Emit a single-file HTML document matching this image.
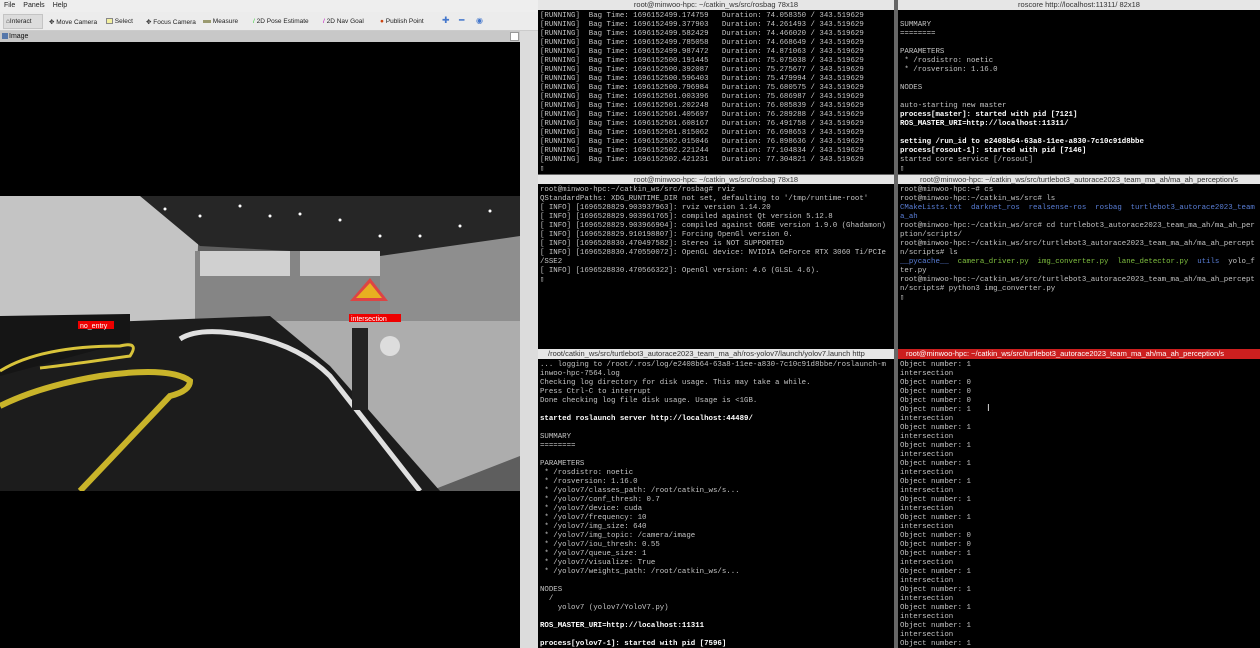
<!DOCTYPE html>
<html><head><meta charset="utf-8"><style>
*{margin:0;padding:0;box-sizing:border-box}
body{width:1260px;height:648px;overflow:hidden;background:#d9d9d9;font-family:"Liberation Sans",sans-serif;position:relative}
.abs{position:absolute}
.menu{left:0;top:0;width:538px;height:12px;background:#eeeeee;font-size:7px;color:#222}
.menu span{margin:0 4px;line-height:12px}
.tool{left:0;top:12px;width:538px;height:19px;background:#ececec;font-size:6.5px;color:#222;border-bottom:1px solid #ccc}
.tool span{position:absolute;top:6px}
.ph{left:0;top:31px;width:520px;height:11px;background:#c8c8c8;font-size:7px;color:#111;line-height:11px;padding-left:9px}
.term{background:#000;color:#c4c4c4;font-family:"Liberation Mono",monospace;font-size:7.4px;line-height:9px;white-space:pre;overflow:hidden;padding-left:2px;padding-top:2px}
.tt{background:#e6e6e6;color:#333;font-size:7.5px;line-height:9px;text-align:center;white-space:nowrap;overflow:hidden}
b{color:#fff;font-weight:bold}
.g{color:#7fbf3f}.bl{color:#5a7fd8}
</style></head><body>
<div class="abs menu"><span>File</span><span>Panels</span><span>Help</span></div>
<div class="abs tool">
<div class="abs" style="left:3px;top:2px;width:40px;height:15px;background:#dcdcdc;border:1px solid #c4c4c4"></div>
<span style="left:6px">⌂Interact</span><span style="left:49px">✥ Move Camera</span>
<span style="left:106px"><i style="display:inline-block;width:7px;height:6px;background:#f3f0a0;border:1px solid #888;vertical-align:middle"></i> Select</span>
<span style="left:146px">✥ Focus Camera</span><span style="left:203px"><i style="display:inline-block;width:8px;height:3px;background:#9a9a70;vertical-align:middle"></i> Measure</span>
<span style="left:253px"><b style="color:#3c3;font-weight:normal">/</b> 2D Pose Estimate</span>
<span style="left:323px"><b style="color:#b0b;font-weight:normal">/</b> 2D Nav Goal</span>
<span style="left:380px;color:#222"><b style="color:#c41;font-weight:normal">●</b> Publish Point</span>
<span style="left:442px;color:#47c;font-size:9px;top:3px">✚</span><span style="left:459px;color:#47c;font-size:9px;top:3px">━</span><span style="left:476px;color:#47c;font-size:8px;top:4px">◉</span>
</div>
<div class="abs ph">Image</div>
<div class="abs" style="left:2px;top:33px;width:6px;height:6px;background:#57a"></div>
<div class="abs" style="left:510px;top:32px;width:9px;height:9px;background:#fff;border:1px solid #999"></div>
<div class="abs" style="left:0;top:42px;width:520px;height:606px;background:#000"></div>
<div class="abs" style="left:520px;top:31px;width:18px;height:617px;background:#dcdcdc"></div>
<svg class="abs" style="left:0;top:196px" width="520" height="295" viewBox="0 0 520 295">
<rect width="520" height="295" fill="#5e5e5e"/>
<polygon points="0,0 200,0 195,125 0,130" fill="#c4c4c4"/>
<polygon points="140,0 520,0 520,80 380,60 200,50" fill="#262626"/>
<rect x="195" y="55" width="185" height="70" fill="#858585"/>
<rect x="200" y="55" width="90" height="25" fill="#d0d0d0"/>
<rect x="300" y="55" width="80" height="25" fill="#c8c8c8"/>
<polygon points="380,60 520,40 520,200 380,120" fill="#8e8e8e"/>
<polygon points="270,125 520,125 520,260 430,295 350,295 300,170" fill="#adadad"/>
<polygon points="0,130 270,120 330,170 440,295 0,295" fill="#1c1c1c"/>
<polygon points="0,120 130,118 130,145 0,180" fill="#151515"/>
<path d="M0,210 Q40,190 100,180 Q170,170 190,185 Q190,195 170,200 L80,295" fill="none" stroke="#c9b42a" stroke-width="6"/>
<path d="M0,175 Q40,150 120,150 Q140,145 130,160 Q60,170 40,172" fill="none" stroke="#d8c33a" stroke-width="3"/>
<path d="M180,143 Q200,130 250,140 Q300,150 330,180 L420,295" fill="none" stroke="#e0e0e0" stroke-width="5"/>
<polygon points="350,105 370,82 388,105" fill="#d44"/>
<polygon points="356,102 370,87 382,102" fill="#e8b020"/>
<rect x="352" y="132" width="16" height="82" fill="#222"/>
<circle cx="390" cy="150" r="10" fill="#ddd"/>
<rect x="78" y="125" width="36" height="8" fill="#e00"/>
<text x="80" y="132" font-size="7" fill="#fff" font-family="Liberation Sans">no_entry</text>
<rect x="349" y="118" width="52" height="8" fill="#e00"/>
<text x="351" y="125" font-size="7" fill="#fff" font-family="Liberation Sans">intersection</text>
<g fill="#fff"><circle cx="165" cy="13" r="1.5"/><circle cx="200" cy="20" r="1.5"/><circle cx="240" cy="10" r="1.5"/><circle cx="270" cy="20" r="1.5"/><circle cx="300" cy="18" r="1.5"/><circle cx="340" cy="24" r="1.5"/><circle cx="380" cy="40" r="1.5"/><circle cx="420" cy="40" r="1.5"/><circle cx="460" cy="30" r="1.5"/><circle cx="490" cy="15" r="1.5"/></g>
</svg>
<!-- terminals -->
<div class="abs" style="left:538px;top:0;width:722px;height:648px;background:#666"></div>
<div class="abs tt" style="left:538px;top:0;width:356px;height:10px">root@minwoo-hpc: ~/catkin_ws/src/rosbag 78x18</div>
<div class="abs tt" style="left:898px;top:0;width:362px;height:10px">roscore http://localhost:11311/ 82x18</div>
<div class="abs term" style="left:538px;top:10px;width:356px;height:164px">[RUNNING]  Bag Time: 1696152499.174759   Duration: 74.058350 / 343.519629
[RUNNING]  Bag Time: 1696152499.377903   Duration: 74.261493 / 343.519629
[RUNNING]  Bag Time: 1696152499.582429   Duration: 74.466020 / 343.519629
[RUNNING]  Bag Time: 1696152499.785058   Duration: 74.668649 / 343.519629
[RUNNING]  Bag Time: 1696152499.987472   Duration: 74.871063 / 343.519629
[RUNNING]  Bag Time: 1696152500.191445   Duration: 75.075038 / 343.519629
[RUNNING]  Bag Time: 1696152500.392087   Duration: 75.275677 / 343.519629
[RUNNING]  Bag Time: 1696152500.596403   Duration: 75.479994 / 343.519629
[RUNNING]  Bag Time: 1696152500.796984   Duration: 75.680575 / 343.519629
[RUNNING]  Bag Time: 1696152501.003396   Duration: 75.686987 / 343.519629
[RUNNING]  Bag Time: 1696152501.202248   Duration: 76.085839 / 343.519629
[RUNNING]  Bag Time: 1696152501.405697   Duration: 76.289288 / 343.519629
[RUNNING]  Bag Time: 1696152501.608167   Duration: 76.491758 / 343.519629
[RUNNING]  Bag Time: 1696152501.815062   Duration: 76.698653 / 343.519629
[RUNNING]  Bag Time: 1696152502.015046   Duration: 76.898636 / 343.519629
[RUNNING]  Bag Time: 1696152502.221244   Duration: 77.104834 / 343.519629
[RUNNING]  Bag Time: 1696152502.421231   Duration: 77.304821 / 343.519629
▯</div>
<div class="abs term" style="left:898px;top:10px;width:362px;height:164px">
SUMMARY
========

PARAMETERS
 * /rosdistro: noetic
 * /rosversion: 1.16.0

NODES

auto-starting new master
<b>process[master]: started with pid [7121]</b>
<b>ROS_MASTER_URI=http://localhost:11311/</b>

<b>setting /run_id to e2408b64-63a8-11ee-a830-7c10c91d8bbe</b>
<b>process[rosout-1]: started with pid [7146]</b>
started core service [/rosout]
▯</div>
<div class="abs tt" style="left:538px;top:175px;width:356px;height:9px">root@minwoo-hpc: ~/catkin_ws/src/rosbag 78x18</div>
<div class="abs tt" style="left:898px;top:175px;width:362px;height:9px">root@minwoo-hpc: ~/catkin_ws/src/turtlebot3_autorace2023_team_ma_ah/ma_ah_perception/s</div>
<div class="abs term" style="left:538px;top:184px;width:356px;height:165px">root@minwoo-hpc:~/catkin_ws/src/rosbag# rviz
QStandardPaths: XDG_RUNTIME_DIR not set, defaulting to '/tmp/runtime-root'
[ INFO] [1696528829.903937963]: rviz version 1.14.20
[ INFO] [1696528829.903961765]: compiled against Qt version 5.12.8
[ INFO] [1696528829.903966904]: compiled against OGRE version 1.9.0 (Ghadamon)
[ INFO] [1696528829.910198807]: Forcing OpenGl version 0.
[ INFO] [1696528830.470497582]: Stereo is NOT SUPPORTED
[ INFO] [1696528830.470550072]: OpenGL device: NVIDIA GeForce RTX 3060 Ti/PCIe
/SSE2
[ INFO] [1696528830.470566322]: OpenGl version: 4.6 (GLSL 4.6).
▯</div>
<div class="abs term" style="left:898px;top:184px;width:362px;height:165px">root@minwoo-hpc:~# cs
root@minwoo-hpc:~/catkin_ws/src# ls
<span class="bl">CMakeLists.txt  darknet_ros  realsense-ros  rosbag  turtlebot3_autorace2023_team</span>
<span class="bl">a_ah</span>
root@minwoo-hpc:~/catkin_ws/src# cd turtlebot3_autorace2023_team_ma_ah/ma_ah_per
ption/scripts/
root@minwoo-hpc:~/catkin_ws/src/turtlebot3_autorace2023_team_ma_ah/ma_ah_percept
n/scripts# ls
<span class="bl">__pycache__</span>  <span class="g">camera_driver.py  img_converter.py  lane_detector.py</span>  <span class="bl">utils</span>  yolo_f
ter.py
root@minwoo-hpc:~/catkin_ws/src/turtlebot3_autorace2023_team_ma_ah/ma_ah_percept
n/scripts# python3 img_converter.py
▯</div>
<div class="abs tt" style="left:538px;top:349px;width:356px;height:10px;text-align:left;padding-left:10px">/root/catkin_ws/src/turtlebot3_autorace2023_team_ma_ah/ros-yolov7/launch/yolov7.launch http</div>
<div class="abs tt" style="left:898px;top:349px;width:362px;height:10px;background:#cc1f1f;color:#fff;text-align:left;padding-left:8px">root@minwoo-hpc: ~/catkin_ws/src/turtlebot3_autorace2023_team_ma_ah/ma_ah_perception/s</div>
<div class="abs term" style="left:538px;top:359px;width:356px;height:289px">... logging to /root/.ros/log/e2408b64-63a8-11ee-a830-7c10c91d8bbe/roslaunch-m
inwoo-hpc-7564.log
Checking log directory for disk usage. This may take a while.
Press Ctrl-C to interrupt
Done checking log file disk usage. Usage is &lt;1GB.

<b>started roslaunch server http://localhost:44489/</b>

SUMMARY
========

PARAMETERS
 * /rosdistro: noetic
 * /rosversion: 1.16.0
 * /yolov7/classes_path: /root/catkin_ws/s...
 * /yolov7/conf_thresh: 0.7
 * /yolov7/device: cuda
 * /yolov7/frequency: 10
 * /yolov7/img_size: 640
 * /yolov7/img_topic: /camera/image
 * /yolov7/iou_thresh: 0.55
 * /yolov7/queue_size: 1
 * /yolov7/visualize: True
 * /yolov7/weights_path: /root/catkin_ws/s...

NODES
  /
    yolov7 (yolov7/YoloV7.py)

<b>ROS_MASTER_URI=http://localhost:11311</b>

<b>process[yolov7-1]: started with pid [7596]</b></div>
<div class="abs term" style="left:898px;top:359px;width:362px;height:289px">Object number: 1
intersection
Object number: 0
Object number: 0
Object number: 0
Object number: 1
intersection
Object number: 1
intersection
Object number: 1
intersection
Object number: 1
intersection
Object number: 1
intersection
Object number: 1
intersection
Object number: 1
intersection
Object number: 0
Object number: 0
Object number: 1
intersection
Object number: 1
intersection
Object number: 1
intersection
Object number: 1
intersection
Object number: 1
intersection
Object number: 1</div>
<div class="abs" style="left:987px;top:403px;font-size:10px;color:#ddd">I</div>
</body></html>
